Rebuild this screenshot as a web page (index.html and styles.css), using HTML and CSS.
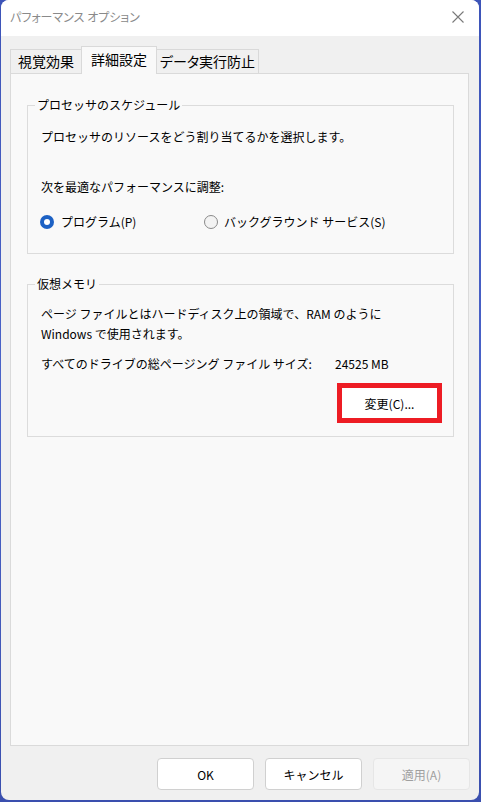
FILE: index.html
```html
<!DOCTYPE html>
<html lang="ja">
<head>
<meta charset="utf-8">
<title>パフォーマンス オプション</title>
<link rel="stylesheet" href="styles.css">
</head>
<body>
<div class="window">
  <div class="titlebar">
    <span class="title">パフォーマンス オプション</span>
    <svg class="close" width="12" height="12" viewBox="0 0 12 12"><path d="M0.5 0.5 L11.5 11.5 M11.5 0.5 L0.5 11.5" stroke="#7a7a7a" stroke-width="1.1" fill="none"/></svg>
  </div>
  <div class="content">
    <div class="tabs">
      <div class="tab t1">視覚効果</div>
      <div class="tab t2 active">詳細設定</div>
      <div class="tab t3">データ実行防止</div>
    </div>
    <div class="panel">
      <fieldset class="group g1">
        <legend>プロセッサのスケジュール</legend>
        <p class="desc">プロセッサのリソースをどう割り当てるかを選択します。</p>
        <p class="adjust">次を最適なパフォーマンスに調整:</p>
        <div class="radios">
          <label class="radio r1"><span class="dot on"></span><span>プログラム(P)</span></label>
          <label class="radio r2"><span class="dot"></span><span>バックグラウンド サービス(S)</span></label>
        </div>
      </fieldset>
      <fieldset class="group g2">
        <legend>仮想メモリ</legend>
        <p class="vmdesc">ページ ファイルとはハードディスク上の領域で、RAM のように<br>Windows で使用されます。</p>
        <div class="total"><span class="total-label">すべてのドライブの総ページング ファイル サイズ:</span><span>24525 MB</span></div>
        <div class="change-row"><button class="change">変更(C)...</button></div>
      </fieldset>
    </div>
    <div class="buttons">
      <button class="btn">OK</button>
      <button class="btn">キャンセル</button>
      <button class="btn disabled">適用(A)</button>
    </div>
  </div>
</div>
</body>
</html>
```
FILE: styles.css
```css
html, body {
  margin: 0;
  padding: 0;
}
body {
  width: 481px;
  height: 802px;
  background: linear-gradient(180deg, #3d54b8 0%, #4a63c9 50%, #3a4fae 100%);
  font-family: "Noto Sans CJK JP", "Noto Sans", sans-serif;
  font-size: 12px;
  color: #000;
  overflow: hidden;
}
.window {
  margin-left: 1px;
  width: 478px;
  height: 800px;
  border-radius: 8px;
  overflow: hidden;
  background: #f0f0f0;
  display: flex;
  flex-direction: column;
}
.titlebar {
  height: 36px;
  flex: none;
  background: #ffffff;
  display: flex;
  align-items: center;
  justify-content: space-between;
  padding: 0 15px 0 9px;
  box-sizing: border-box;
}
.title {
  font-size: 12px;
  color: #8a8a8a;
  font-feature-settings: "palt";
  line-height: 16px;
  margin-top: -2px;
}
.close {
  display: block;
  margin-top: -3px;
}
.content {
  flex: 1;
  display: flex;
  flex-direction: column;
  padding: 10px 9px 0 9px;
}
.tabs {
  display: flex;
  align-items: flex-end;
  height: 28px;
  margin-bottom: -1px;
  position: relative;
  z-index: 1;
}
.tab {
  box-sizing: border-box;
  height: 24px;
  margin-bottom: 1px;
  border: 1px solid #d9d9d9;
  border-bottom: none;
  background: #f0f0f0;
  font-size: 14px;
  line-height: 22px;
  font-feature-settings: "palt";
  white-space: nowrap;
  text-align: center;
  color: #000;
}
.t1 { width: 72px; }
.t2 { width: 76px; margin-left: -1px; }
.t3 { width: 103px; margin-left: -1px; }
.tab.active {
  height: 28px;
  margin-bottom: 0;
  background: #f9f9f9;
  line-height: 24px;
}
.panel {
  box-sizing: border-box;
  width: 459px;
  height: 673px;
  border: 1px solid #dadada;
  background: #f9f9f9;
  padding: 0 14px 0 16px;
}
.group {
  margin: 0;
  padding: 0;
  border: 1px solid #dcdcdc;
  min-inline-size: 0;
}
.group legend {
  font-size: 12px;
  line-height: 14px;
  padding: 0 2px;
  margin-left: 7px;
}
.g1 { margin-top: 24px; }
.g2 { margin-top: 23px; }
p { margin: 0; }
.desc {
  margin: 17px 0 0 13px;
  line-height: 16px;
}
.adjust {
  margin: 34px 0 0 13px;
  line-height: 16px;
}
.radios {
  display: flex;
  margin-top: 19px;
  padding: 0 0 23px 12px;
  line-height: 16px;
}
.radio {
  display: flex;
  align-items: center;
}
.r1 { width: 164px; gap: 7px; }
.r2 { gap: 6px; }
.dot {
  box-sizing: border-box;
  width: 14px;
  height: 14px;
  border-radius: 50%;
  border: 1px solid #8a8a8a;
  background: #f3f3f3;
  display: flex;
  align-items: center;
  justify-content: center;
}
.dot.on {
  border: none;
  background: #1d61c4;
}
.dot.on::after {
  content: "";
  width: 6px;
  height: 6px;
  border-radius: 50%;
  background: #ffffff;
}
.vmdesc {
  margin: 13px 0 0 13px;
  line-height: 20px;
}
.total {
  display: flex;
  margin: 12px 0 0 13px;
  line-height: 16px;
}
.total-label {
  width: 294px;
}
.change-row {
  display: flex;
  justify-content: flex-end;
  margin-top: 11px;
  padding: 0 11px 13px 0;
}
.change {
  box-sizing: border-box;
  width: 105px;
  height: 40px;
  border: 5px solid #ed1c24;
  background: #ffffff;
  font-family: inherit;
  font-size: 12px;
  color: #000;
  padding: 0;
  margin: 0;
}
.buttons {
  display: flex;
  justify-content: flex-end;
  gap: 11px;
  margin-top: 12px;
  padding-right: 0;
}
.btn {
  box-sizing: border-box;
  width: 97px;
  height: 32px;
  border: 1px solid #d0d0d0;
  border-radius: 4px;
  background: #ffffff;
  font-family: inherit;
  font-size: 12px;
  color: #000;
  padding: 0;
  margin: 0;
}
.btn.disabled {
  background: #f5f5f5;
  border-color: #e6e6e6;
  color: #9f9f9f;
}
```
